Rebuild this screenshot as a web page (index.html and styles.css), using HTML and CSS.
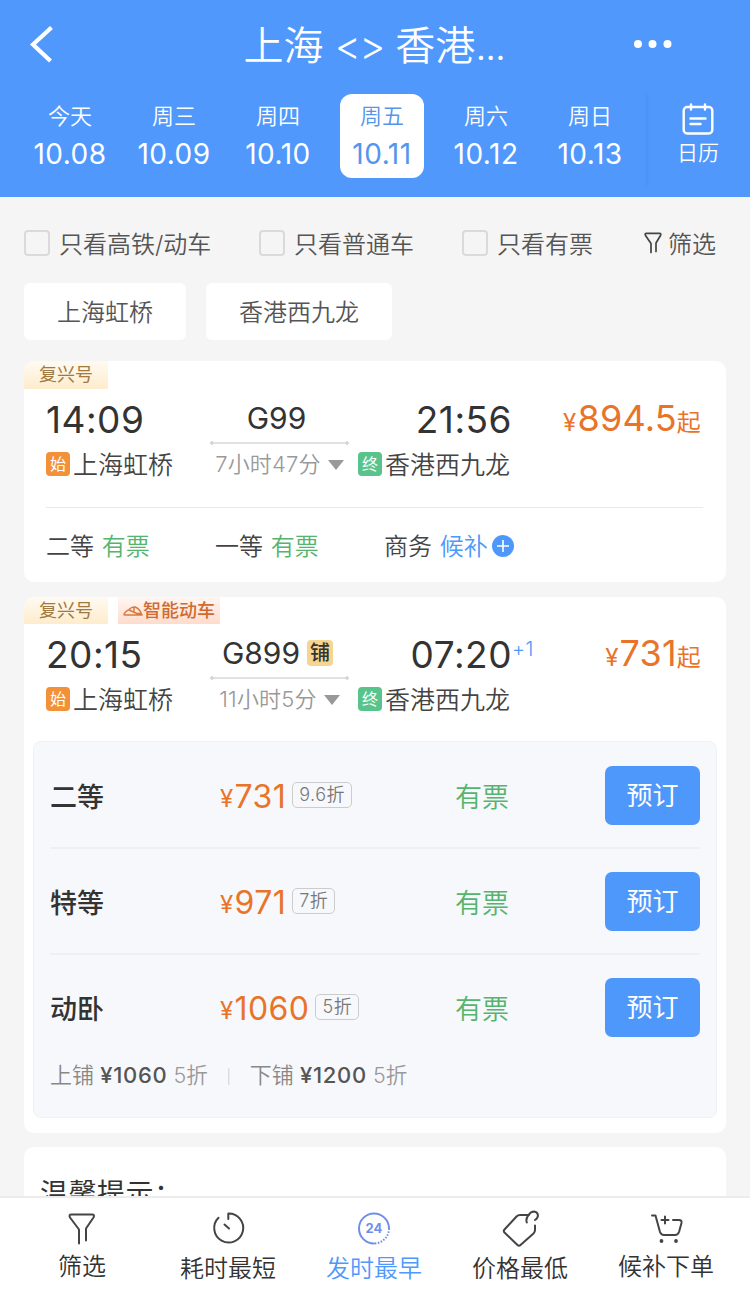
FILE: index.html
```html
<!DOCTYPE html>
<html lang="zh-CN">
<head>
    <meta charset="UTF-8">
    <meta name="viewport" content="width=device-width, initial-scale=1.0">
    <title>上海 - 香港西九龙</title>
    <link rel="stylesheet" href="styles.css">
</head>
<body>
    <header class="header">
        <div class="title-bar">
            <svg class="back" width="28" height="40" viewBox="0 0 28 40"><path d="M25.500 3.500L7 20.500L24.500 37" fill="none" stroke="#fff" stroke-width="4.200"/></svg>
            <h1>上海 <span>&lt;&gt;</span> 香港<span>...</span></h1>
            <svg class="more" width="40" height="10" viewBox="0 0 40 10" fill="#fff"><circle cx="5" cy="5" r="4"/><circle cx="19.500" cy="5" r="4"/><circle cx="34.500" cy="5" r="4"/></svg>
        </div>
        <div class="dates">
            <div class="date"><span>今天</span><b>10.08</b></div>
            <div class="date"><span>周三</span><b>10.09</b></div>
            <div class="date"><span>周四</span><b>10.10</b></div>
            <div class="date active"><span>周五</span><b>10.11</b></div>
            <div class="date"><span>周六</span><b>10.12</b></div>
            <div class="date"><span>周日</span><b>10.13</b></div>
            <div class="calendar">
                <svg width="34" height="34" viewBox="0 0 34 34" fill="none" stroke="#fff" stroke-width="2.400" stroke-linecap="round"><rect x="2.700" y="5" width="28.600" height="26.500" rx="3.500"/><path d="M10 2.500v5M24 2.500v5M9.500 16.500h15M9.500 22h10"/></svg>
                <span>日历</span>
            </div>
        </div>
    </header>

    <main class="content">
        <div class="filters">
            <label class="check"><i></i>只看高铁/动车</label>
            <label class="check"><i></i>只看普通车</label>
            <label class="check"><i></i>只看有票</label>
            <div class="filter-btn">
                <svg width="19" height="24" viewBox="0 0 19 24" fill="none" stroke="#444" stroke-width="1.700" stroke-linecap="round" stroke-linejoin="round"><path d="M7 21.500V12.500L1.500 4.500Q.500 2.300 2.500 2.300H15.500Q17.500 2.300 16.500 4.500L12 12V20.500"/></svg>
                筛选
            </div>
        </div>
        <div class="chips">
            <div class="chip">上海虹桥</div>
            <div class="chip">香港西九龙</div>
        </div>

        <section class="card first">
            <div class="tags"><span class="tag">复兴号</span></div>
            <div class="train">
                <div class="depart">
                    <div class="time">14:09</div>
                    <div class="station"><em class="badge start">始</em>上海虹桥</div>
                </div>
                <div class="trip">
                    <div class="number">G99</div>
                    <div class="line"></div>
                    <div class="duration">7小时47分<i class="arrow"></i></div>
                </div>
                <div class="arrive">
                    <div class="time">21:56</div>
                    <div class="station"><em class="badge end">终</em>香港西九龙</div>
                </div>
                <div class="price"><small>¥</small>894.5<span>起</span></div>
            </div>
            <div class="seats">
                <div>二等 <span class="green">有票</span></div>
                <div>一等 <span class="green">有票</span></div>
                <div>商务 <span class="blue">候补</span><svg width="22" height="22" viewBox="0 0 22 22"><circle cx="11" cy="11" r="11" fill="#4f98fb"/><path d="M5 11h12M11 5v12" stroke="#fff" stroke-width="1.600"/></svg></div>
            </div>
        </section>

        <section class="card second">
            <div class="tags">
                <span class="tag">复兴号</span>
                <span class="tag smart"><svg width="20" height="12" viewBox="0 0 20 12" fill="none" stroke="#d9793f" stroke-width="1.500" stroke-linejoin="round"><path d="M1 9.500C1.500 7 4 6 6 4.500C8 2.500 9.500 1.500 12 2C15 2.800 17.500 6 19 10H2.500Q.800 10 1 9.500M6 5L14 8.500H17.500M11 2V7"/></svg>智能动车</span>
            </div>
            <div class="train">
                <div class="depart">
                    <div class="time">20:15</div>
                    <div class="station"><em class="badge start">始</em>上海虹桥</div>
                </div>
                <div class="trip">
                    <div class="number">G899<em class="sleeper">铺</em></div>
                    <div class="line"></div>
                    <div class="duration">11小时5分<i class="arrow"></i></div>
                </div>
                <div class="arrive">
                    <div class="time">07:20<sup>+1</sup></div>
                    <div class="station"><em class="badge end">终</em>香港西九龙</div>
                </div>
                <div class="price"><small>¥</small>731<span>起</span></div>
            </div>
            <div class="panel">
                <div class="row">
                    <div class="seat">二等</div>
                    <div class="fare"><small>¥</small>731<span class="discount">9.6折</span></div>
                    <div class="left">有票</div>
                    <button class="book">预订</button>
                </div>
                <div class="row">
                    <div class="seat">特等</div>
                    <div class="fare"><small>¥</small>971<span class="discount">7折</span></div>
                    <div class="left">有票</div>
                    <button class="book">预订</button>
                </div>
                <div class="row">
                    <div class="seat">动卧</div>
                    <div class="fare"><small>¥</small>1060<span class="discount">5折</span></div>
                    <div class="left">有票</div>
                    <button class="book">预订</button>
                </div>
                <div class="berths">
                    <span>上铺 <b>¥1060</b> <small>5折</small></span>
                    <span>下铺 <b>¥1200</b> <small>5折</small></span>
                </div>
            </div>
        </section>

        <section class="card tips">温馨提示：</section>
    </main>

    <nav class="tabs">
        <div class="tab raised">
            <svg width="36" height="38" viewBox="0 0 36 38"><path d="M15 33.500V19.500L6 7.500Q4.500 4.500 7.500 4.500H28Q31 4.500 29.500 7.500L22 18.500V30.500"/></svg>
            筛选
        </div>
        <div class="tab">
            <svg width="36" height="38" viewBox="0 0 36 38"><path d="M18.300 9V3.500A14.500 14.500 0 1 1 8.500 7.700M14.500 14.500L19 18.500"/></svg>
            耗时最短
        </div>
        <div class="tab active">
            <svg width="36" height="38" viewBox="0 0 36 38"><path d="M18 33.500A15 15 0 1 1 33 18.500"/><path d="M33 18.500A15 15 0 0 1 18 33.500" stroke-dasharray="1.500 1.500" stroke-linecap="butt"/><text x="18" y="23" text-anchor="middle">24</text></svg>
            发时最早
        </div>
        <div class="tab">
            <svg width="40" height="38" viewBox="0 0 40 38"><path d="M29 5H20Q18 5 16.500 6.500L4.500 19.500Q3 21 4.500 22.500L17.500 35Q19 36.500 20.500 35L33.500 23.500Q35 22 35 20V15.500M26.800 12.500C25 8 30 1.500 34 1.500C38.500 2 39.500 7 35 10"/></svg>
            价格最低
        </div>
        <div class="tab raised">
            <svg width="36" height="38" viewBox="0 0 36 38"><path d="M4 5.500H7.500L12 22Q13 25 16 25H27Q30 25 31 22L33.500 13Q34 10 31 10H25M17 6.500V13.500M13.500 10H20.500"/><g class="wheels"><circle cx="13.500" cy="31" r="1.900"/><circle cx="28" cy="31" r="1.900"/></g></svg>
            候补下单
        </div>
    </nav>
</body>
</html>
```
FILE: styles.css
```css
* {
    box-sizing: border-box;
}
body {
    margin: 0;
    width: 750px;
    height: 1294px;
    display: flex;
    flex-direction: column;
    overflow: hidden;
    background: #f5f5f5;
    font-family: Inter, "Noto Sans CJK SC", sans-serif;
    font-weight: 350;
    color: #333;
}
em, i {
    font-style: normal;
}
svg {
    flex-shrink: 0;
}

/* header */
.header {
    height: 197px;
    background: #5198fd;
    color: #fff;
}
.title-bar {
    height: 88px;
    padding: 0 77px 0 26px;
    display: grid;
    grid-template-columns: 120px 1fr 40px;
    align-items: center;
}
.title-bar h1 {
    margin: 0;
    padding: 3px 31px 0 0;
    text-align: center;
    font-size: 40px;
    line-height: 60px;
    font-weight: 350;
}
.title-bar h1 span {
    letter-spacing: -1.500px;
}
.dates {
    display: flex;
    padding: 6px 0 0 18px;
}
.date {
    width: 84px;
    height: 84px;
    margin: 0 10px;
    padding-top: 7px;
    border-radius: 12px;
    display: flex;
    flex-direction: column;
    align-items: center;
}
.date span {
    font-size: 22px;
    line-height: 30px;
}
.date b {
    font-size: 28px;
    line-height: 46px;
    font-weight: 400;
    letter-spacing: 0.500px;
}
.date.active {
    background: #fff;
    color: #5595ed;
}
.calendar {
    width: 104px;
    height: 92px;
    margin-left: 4px;
    padding-top: 8px;
    display: flex;
    flex-direction: column;
    align-items: center;
    font-size: 21px;
    line-height: 34px;
    background: linear-gradient(to right, #4c93f8, #5198fd 5px);
}

/* filters */
.content {
    flex: 1;
    min-height: 0;
    overflow: hidden;
    padding: 0 24px;
}
.filters {
    display: grid;
    grid-template-columns: 235px 203px 182px auto;
    height: 86px;
    padding-top: 5px;
    align-items: center;
    font-size: 24px;
    color: #555;
}
.check {
    display: flex;
    align-items: center;
    gap: 9px;
}
.check i {
    width: 26px;
    height: 26px;
    border: 2px solid #dadada;
    border-radius: 4px;
}
.filter-btn {
    display: flex;
    align-items: center;
    gap: 5px;
}
.chips {
    display: flex;
    gap: 20px;
}
.chip {
    height: 57px;
    padding: 0 33px;
    border-radius: 6px;
    background: #fff;
    font-size: 24px;
    line-height: 59px;
    color: #555;
}

/* train cards */
.card {
    background: #fff;
    border-radius: 10px;
    overflow: hidden;
}
.first {
    height: 221px;
    margin-top: 21px;
}
.second {
    height: 536px;
    margin-top: 15px;
}
.tags {
    display: flex;
    gap: 10px;
    height: 28px;
}
.second .tags {
    height: 27px;
}
.tag {
    width: 84px;
    text-align: center;
    font-size: 18px;
    line-height: 27px;
    font-weight: 400;
    color: #a07a42;
    background: linear-gradient(#fffaf1, #feeccd);
}
.tag.smart {
    width: 102px;
    display: flex;
    align-items: center;
    justify-content: center;
    color: #cf6a32;
    font-weight: 500;
    background: linear-gradient(#fff6f2, #fedccc);
}
.train {
    display: grid;
    grid-template-columns: 164px 139px 162px 1fr;
    padding: 0 25px 0 22px;
    height: 118px;
}
.time {
    height: 59px;
    font-size: 37px;
    line-height: 62px;
    font-weight: 400;
    letter-spacing: 0.500px;
    white-space: nowrap;
}
.station {
    display: flex;
    align-items: flex-start;
    gap: 3px;
    height: 32px;
    font-size: 25px;
    line-height: 35px;
    color: #444;
    white-space: nowrap;
}
.badge {
    width: 24px;
    height: 24px;
    margin-top: 4px;
    border-radius: 4px;
    text-align: center;
    font-size: 16px;
    line-height: 24px;
    font-weight: 400;
    color: #fff;
}
.start {
    background: #f29138;
}
.end {
    background: #58c48b;
}
.number {
    display: flex;
    justify-content: center;
    align-items: center;
    height: 53px;
    padding: 5px 6px 0 0;
    font-size: 30px;
    font-weight: 400;
}
.sleeper {
    width: 26px;
    height: 26px;
    margin-left: 7px;
    border-radius: 4px;
    background: #f5d58f;
    font-size: 20px;
    line-height: 27px;
    text-align: center;
    font-weight: 500;
}
.second .number {
    padding-right: 4px;
}
/* route line with a dot at each end */
.line {
    height: 4px;
    margin: -1px 0;
    background:
        radial-gradient(circle at 2px 2px, #d6d6d6 1.500px, transparent 2px),
        radial-gradient(circle at 137px 2px, #d6d6d6 1.500px, transparent 2px),
        linear-gradient(#e2e2e2, #e2e2e2) 0 1px / 100% 2px no-repeat;
}
.duration {
    display: flex;
    justify-content: center;
    align-items: center;
    gap: 7px;
    height: 43px;
    padding-bottom: 3px;
    font-size: 22px;
    line-height: 32px;
    letter-spacing: 0.200px;
    color: #999;
    white-space: nowrap;
}
.arrow {
    margin-top: 2px;
    border: 8px solid transparent;
    border-top: 10px solid #999;
    border-bottom: 0;
}
.arrive {
    padding-left: 9px;
}
.arrive .time {
    display: flex;
    width: 154px;
    justify-content: flex-end;
}
.arrive sup {
    width: 0;
    margin-top: -5px;
    font-size: 20px;
    line-height: 60px;
    font-weight: 350;
    color: #4f98fb;
}
.price {
    height: 60px;
    text-align: right;
    font-size: 36px;
    line-height: 59px;
    font-weight: 400;
    letter-spacing: 0.200px;
    color: #e8742a;
    white-space: nowrap;
}
.price small, .price span {
    font-size: 24px;
}
.price small {
    margin-right: 1px;
}
.seats {
    display: grid;
    grid-template-columns: 169px 169px 1fr;
    height: 75px;
    margin: 0 23px 0 22px;
    border-top: 1px solid #e9e9e9;
    font-size: 24px;
    line-height: 77px;
    word-spacing: 1px;
    color: #444;
}
.seats svg {
    vertical-align: -2px;
    margin-left: 4px;
}
.green, .left {
    color: #55b46d;
}
.blue {
    color: #4f98fb;
}

/* seat list */
.panel {
    height: 377px;
    margin: -1px 9px 0;
    padding: 1px 16px 0;
    border: 1px solid #eef1f5;
    border-radius: 8px;
    background: #f7f8fb;
}
.row {
    display: grid;
    grid-template-columns: 170px 235px 1fr 95px;
    align-items: center;
    height: 106px;
    border-bottom: 2px solid #eef1f4;
}
.row:nth-child(3) {
    border-color: transparent;
}
.seat {
    font-size: 27px;
    font-weight: 500;
}
.fare {
    display: flex;
    align-items: center;
    padding-top: 3px;
    font-size: 32px;
    line-height: 40px;
    font-weight: 400;
    letter-spacing: 0.400px;
    color: #e8742a;
}
.fare small {
    margin-right: 1px;
    font-size: 24px;
    padding-top: 4px;
}
.discount {
    height: 26px;
    margin: -4px 0 0 6px;
    padding: 0 6px;
    border: 1.500px solid #ccc;
    border-radius: 5px;
    font-size: 18px;
    line-height: 24px;
    font-weight: 350;
    letter-spacing: 0.500px;
    color: #777;
}
.left {
    font-size: 27px;
}
.book {
    height: 59px;
    padding: 0;
    border: 0;
    border-radius: 7px;
    background: #4f98fb;
    color: #fff;
    font: 400 26px/59px Inter, "Noto Sans CJK SC", sans-serif;
}
.berths {
    display: flex;
    margin-top: -1px;
    font-size: 22px;
    line-height: 30px;
    color: #888;
}
.berths b {
    font-weight: 500;
    letter-spacing: 0.700px;
    color: #555;
}
.berths small {
    font-size: 21.500px;
    color: #999;
}
.berths span + span {
    margin-left: 20px;
    padding-left: 22px;
    background: linear-gradient(#ddd, #ddd) 0 8px / 1.500px 17px no-repeat;
}
.tips {
    height: 120px;
    margin-top: 14px;
    padding: 26px 16px;
    font-size: 28px;
    line-height: 42px;
    letter-spacing: 0.500px;
    font-weight: 400;
}

/* bottom tabs */
.tabs {
    display: flex;
    height: 98px;
    padding: 0 11px 0 9px;
    border-top: 2px solid #ececec;
    background: #fff;
}
.tab {
    width: 146px;
    padding-top: 12px;
    display: flex;
    flex-direction: column;
    align-items: center;
    gap: 5px;
    font-size: 24px;
    line-height: 32px;
    color: #333;
}
.tab svg {
    fill: none;
    stroke: #444;
    stroke-width: 2;
    stroke-linecap: round;
    stroke-linejoin: round;
}
.tab.raised {
    gap: 3px;
}
.tab.active {
    color: #5198fd;
}
.tab.active svg {
    stroke: #6f8fe8;
}
.tab text {
    fill: #6f8fe8;
    stroke: none;
    font-size: 13px;
    font-weight: 700;
}
.wheels {
    fill: #444;
    stroke: none;
}
```
